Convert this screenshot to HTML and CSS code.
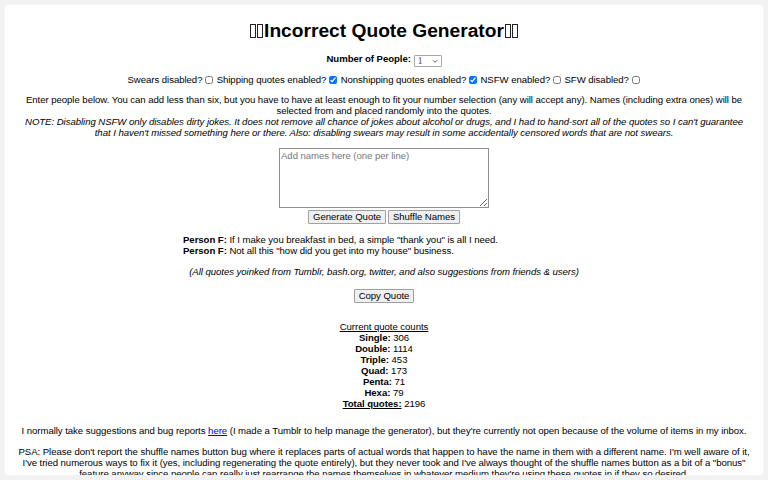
FILE: index.html
```html
<!DOCTYPE html>
<html lang="en">
<head>
<meta charset="utf-8">
<title>Incorrect Quote Generator</title>
<link rel="stylesheet" href="styles.css">
</head>
<body>
<div class="page">
  <h1 class="title"><span class="tofu"></span><span class="tofu"></span>Incorrect Quote Generator<span class="tofu"></span><span class="tofu"></span></h1>

  <p class="row people-row"><b>Number of People:</b> <select class="people"><option>1</option><option>2</option><option>3</option><option>4</option><option>5</option><option>6</option><option>Any</option></select></p>

  <p class="row options">Swears disabled? <input type="checkbox"> Shipping quotes enabled? <input type="checkbox" checked> Nonshipping quotes enabled? <input type="checkbox" checked> NSFW enabled? <input type="checkbox"> SFW disabled? <input type="checkbox"></p>

  <p class="intro">Enter people below. You can add less than six, but you have to have at least enough to fit your number selection (any will accept any). Names (including extra ones) will be selected from and placed randomly into the quotes.<br><i>NOTE: Disabling NSFW only disables dirty jokes. It does not remove all chance of jokes about alcohol or drugs, and I had to hand-sort all of the quotes so I can't guarantee that I haven't missed something here or there. Also: disabling swears may result in some accidentally censored words that are not swears.</i></p>

  <div class="entry">
    <textarea class="names" placeholder="Add names here (one per line)"></textarea><br>
    <button type="button" class="btn">Generate Quote</button> <button type="button" class="btn">Shuffle Names</button>
  </div>

  <div class="quote">
    <b>Person F:</b> If I make you breakfast in bed, a simple "thank you" is all I need.<br>
    <b>Person F:</b> Not all this "how did you get into my house" business.
  </div>

  <p class="credit"><i>(All quotes yoinked from Tumblr, bash.org, twitter, and also suggestions from friends &amp; users)</i></p>

  <p class="copy"><button type="button" class="btn">Copy Quote</button></p>

  <div class="counts">
    <u>Current quote counts</u><br>
    <b>Single:</b> 306<br>
    <b>Double:</b> 1114<br>
    <b>Triple:</b> 453<br>
    <b>Quad:</b> 173<br>
    <b>Penta:</b> 71<br>
    <b>Hexa:</b> 79<br>
    <b><u>Total quotes:</u></b> 2196
  </div>

  <p class="note">I normally take suggestions and bug reports <a href="#">here</a> (I made a Tumblr to help manage the generator), but they're currently not open because of the volume of items in my inbox.</p>

  <p class="note">PSA: Please don't report the shuffle names button bug where it replaces parts of actual words that happen to have the name in them with a different name. I'm well aware of it, I've tried numerous ways to fix it (yes, including regenerating the quote entirely), but they never took and I've always thought of the shuffle names button as a bit of a "bonus" feature anyway since people can really just rearrange the names themselves in whatever medium they're using these quotes in if they so desired.</p>
</div>
</body>
</html>
```

FILE: styles.css
```css
html {
  background: #f2f2f2;
}

body {
  margin: 5px;
  font-family: "Liberation Sans", Arial, sans-serif;
  font-size: 9.6px;
  letter-spacing: -0.05px;
  color: #000;
}

.page {
  background: #fff;
  height: 470px;
  overflow: hidden;
  padding: 0 12px;
  box-shadow: 0 0 3px rgba(0, 0, 0, 0.12);
  text-align: center;
}

.title {
  font-size: 19.2px;
  font-weight: bold;
  letter-spacing: 0;
  margin: 15px 0 11px;
}

.tofu {
  display: inline-block;
  width: 4px;
  height: 12px;
  border: 1px solid #222;
  margin: 0 0.6px;
  vertical-align: -1px;
}

p {
  margin: 9.6px 0;
}

.people-row {
  margin-bottom: 8.6px;
}

.options {
  margin-top: 8.6px;
}

button,
select,
textarea {
  font-family: inherit;
  font-size: 9.6px;
  letter-spacing: -0.05px;
}

.people {
  appearance: none;
  width: 28px;
  height: 12px;
  margin: -2px 0;
  padding: 0 0 0 3px;
  border: 1px solid #a9a9a9;
  border-radius: 1px;
  background: #fff url("data:image/svg+xml,%3Csvg xmlns='http://www.w3.org/2000/svg' width='8' height='6' viewBox='0 0 8 6'%3E%3Cpath d='M1.5 1.5 L4 4 L6.5 1.5' fill='none' stroke='%23333' stroke-width='1.1'/%3E%3C/svg%3E") no-repeat right 3px center / 6px 5px;
  font-family: "Liberation Serif", serif;
  font-size: 10.5px;
  line-height: 10px;
  color: #555;
  vertical-align: -2px;
}

.options input {
  width: 8px;
  height: 8px;
  margin: 0 1px 0 0;
  vertical-align: -1px;
}

.names {
  box-sizing: border-box;
  width: 210px;
  height: 60px;
  padding: 1px 1px;
  border: 1px solid #8f8f8f;
  vertical-align: bottom;
  resize: vertical;
}

.names::placeholder {
  color: #777;
}

.entry {
  margin: 9.6px 0;
  line-height: 1;
}

.btn {
  padding: 1px 3.6px;
  height: 14px;
  line-height: 10px;
  border: 1px solid #a0a0a0;
  border-radius: 1px;
  background: #efefef;
  color: #000;
  margin: 2px 0 0;
}

.quote {
  max-width: 402px;
  margin: 10.6px auto 9.6px;
  text-align: left;
}

.credit {
  margin-top: 10px;
}

.copy {
  margin: 10px 0 18px;
}

.counts {
  margin: 18px 0 16px;
}

.note {
  margin: 9.6px 0;
}

a {
  color: #0000ee;
}
```
